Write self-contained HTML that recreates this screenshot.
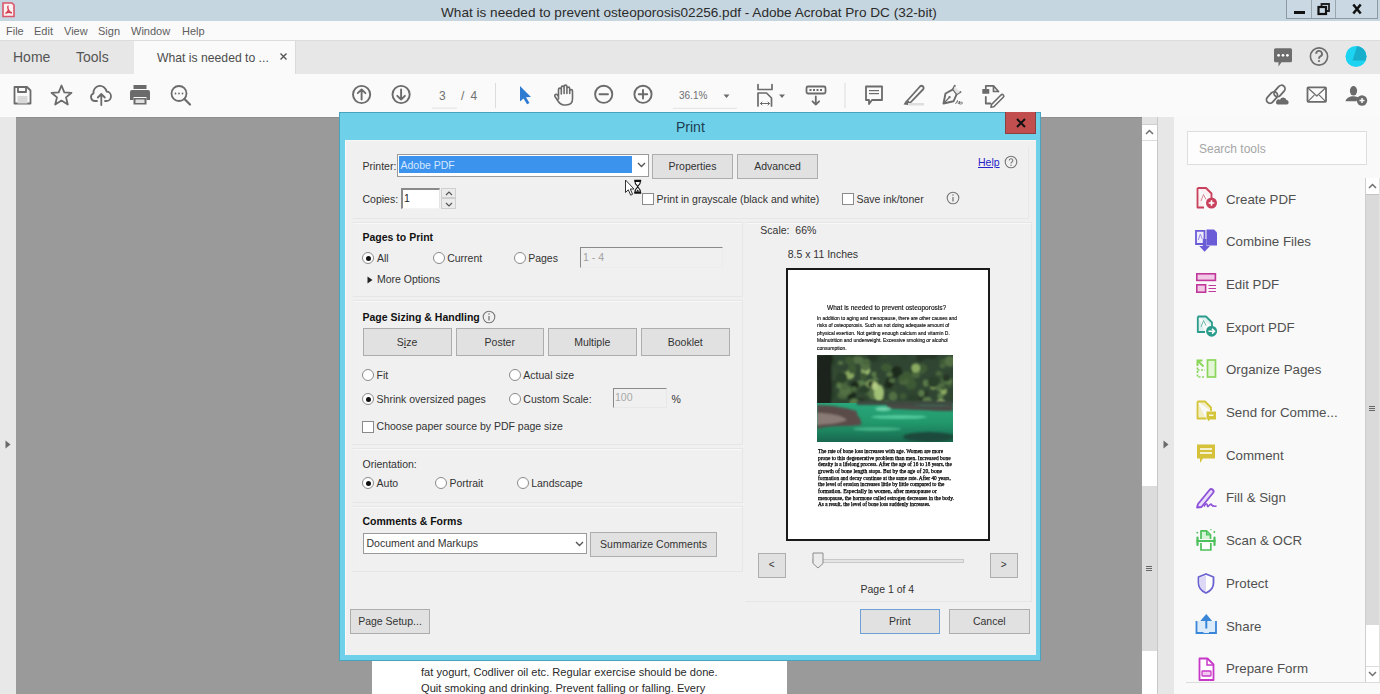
<!DOCTYPE html>
<html><head><meta charset="utf-8">
<style>
*{margin:0;padding:0;box-sizing:border-box}
html,body{width:1380px;height:694px;overflow:hidden;background:#9a9a9a;font-family:"Liberation Sans",sans-serif;color:#333}
.a{position:absolute}
.t{position:absolute;white-space:nowrap;line-height:1}
svg{position:absolute;overflow:visible}
#titlebar{left:0;top:0;width:1380px;height:21px;background:#c6d6e0}
#menubar{left:0;top:21px;width:1380px;height:19px;background:#fafafa}
#tabbar{left:0;top:40px;width:1380px;height:34px;background:#e7e7e7;border-top:1px solid #dcdcdc}
#toolbar{left:0;top:74px;width:1380px;height:43px;background:#fafafa}
#leftstrip{left:0;top:117px;width:16px;height:577px;background:#e8e8e8}
#docarea{left:16px;top:117px;width:1126px;height:577px;background:#9a9a9a}
#rightpanel{left:1174px;top:117px;width:206px;height:577px;background:#f9f9f9}
.menu{font-size:11px;color:#5e5e5e;top:26px}
.tb{stroke:#6b6b6b;fill:none;stroke-width:1.6}
.btn{position:absolute;background:#e1e1e1;border:1px solid #adadad;font-size:10.5px;color:#333;display:flex;align-items:center;justify-content:center;line-height:1;white-space:nowrap}
.rad{position:absolute;width:12px;height:12px;border-radius:50%;background:#fff;border:1px solid #8a8a8a}
.dot{position:absolute;width:5px;height:5px;border-radius:50%;background:#111}
.chk{position:absolute;width:12px;height:12px;background:#fff;border:1px solid #8a8a8a}
.pnl{position:absolute;border:1px solid #e6e6e6;border-left-color:#efefef;box-shadow:inset 0 1px 0 #f8f8f8}
</style></head><body>
<!-- TITLE BAR -->
<div id="titlebar" class="a">
  <svg style="left:2px;top:2px" width="13" height="16" viewBox="0 0 13 16"><path d="M1 1 H10 L12 3 V14.5 H1 Z" fill="#fdf0f0" stroke="#d9556a" stroke-width="1.6"/><path d="M6.5 4 C5.5 4 5.8 6.5 6.5 8 C5.5 10 4.5 11 3.5 11.5 M6.5 8 C7.5 10 8.5 10.8 10 11 M4 11 C6 10 8 10 9.5 11" stroke="#d23c50" stroke-width="1.4" fill="none"/></svg>
  <div class="t" style="left:441px;top:5.5px;font-size:13.6px;color:#2b2b2b">What is needed to prevent osteoporosis02256.pdf - Adobe Acrobat Pro DC (32-bit)</div>
  <div class="a" style="left:1286px;top:0;width:92px;height:19px;border:1px solid #8e9aa3;border-top:none;background:#c9d8e2"></div>
  <div class="a" style="left:1311px;top:0;width:1px;height:18px;background:#9aa6ae"></div>
  <div class="a" style="left:1335px;top:0;width:1px;height:18px;background:#9aa6ae"></div>
  <div class="a" style="left:1294px;top:11px;width:11px;height:2.5px;background:#111"></div>
  <svg style="left:1317px;top:3px" width="13" height="12" viewBox="0 0 13 12"><path d="M4.5 3.5 V1 H12 V8 H9.5" fill="none" stroke="#222" stroke-width="1.8"/><rect x="1.5" y="4" width="7.5" height="7" fill="#c9d8e2" stroke="#111" stroke-width="2.2"/></svg>
  <svg style="left:1352px;top:4px" width="10" height="10" viewBox="0 0 10 10"><path d="M1.3 0.5 L8.7 9.5 M8.7 0.5 L1.3 9.5" stroke="#111" stroke-width="2.5"/></svg>
</div>
<!-- MENU BAR -->
<div id="menubar" class="a"></div>
<div class="t menu" style="left:6px">File</div>
<div class="t menu" style="left:34px">Edit</div>
<div class="t menu" style="left:64px">View</div>
<div class="t menu" style="left:98px">Sign</div>
<div class="t menu" style="left:131px">Window</div>
<div class="t menu" style="left:182px">Help</div>
<!-- TAB BAR -->
<div id="tabbar" class="a"></div>
<div class="a" style="left:134px;top:41px;width:161px;height:33px;background:#fafafa"></div>
<div class="a" style="left:295px;top:41px;width:1px;height:33px;background:#dadada"></div>
<div class="t" style="left:13px;top:50px;font-size:14px;color:#555">Home</div>
<div class="t" style="left:76px;top:50px;font-size:14px;color:#555">Tools</div>
<div class="t" style="left:157px;top:52px;font-size:12.2px;color:#4d4d4d">What is needed to ...</div>
<svg style="left:280px;top:53px" width="7" height="7" viewBox="0 0 7 7"><path d="M0.5 0.5 L6.5 6.5 M6.5 0.5 L0.5 6.5" stroke="#555" stroke-width="1.4"/></svg>
<!-- right tab icons -->
<svg style="left:0;top:0" width="1380" height="80" viewBox="0 0 1380 80">
 <path d="M1275.5 48.3 H1290.5 A1.5 1.5 0 0 1 1292 49.8 V60.8 A1.5 1.5 0 0 1 1290.5 62.3 H1281.5 L1278.5 66.5 V62.3 H1275.5 A1.5 1.5 0 0 1 1274 60.8 V49.8 A1.5 1.5 0 0 1 1275.5 48.3 Z" fill="#6d6d6d"/>
 <circle cx="1278.6" cy="55.3" r="1.35" fill="#fff"/><circle cx="1283" cy="55.3" r="1.35" fill="#fff"/><circle cx="1287.4" cy="55.3" r="1.35" fill="#fff"/>
 <circle cx="1319" cy="56.5" r="8.6" fill="none" stroke="#6d6d6d" stroke-width="1.6"/>
 <path d="M1316.2 53.8 A2.9 2.9 0 1 1 1320.3 56.4 C1319.3 56.9 1319 57.4 1319 58.8" fill="none" stroke="#6d6d6d" stroke-width="1.9"/>
 <circle cx="1319" cy="61" r="1.1" fill="#6d6d6d"/>
 <defs><clipPath id="avc"><circle cx="1356" cy="56.5" r="10.5"/></clipPath></defs>
 <circle cx="1356" cy="56.5" r="10.5" fill="#1cd4f2"/>
 <path d="M1357.5 45 L1352.5 60.5 H1368 V45 Z" fill="#17aecb" clip-path="url(#avc)"/>
</svg>
<!-- TOOLBAR -->
<div id="toolbar" class="a"></div>
<svg style="left:0;top:0" width="1380" height="120" viewBox="0 0 1380 120">
 <g stroke="#6b6b6b" fill="none" stroke-width="1.8" stroke-linejoin="round" stroke-linecap="round">
  <!-- save -->
  <path d="M14.5 87 H27 L30.5 90.5 V103.5 H14.5 Z"/>
  <rect x="18" y="87" width="8" height="5" />
  <rect x="17.5" y="96" width="10" height="7.5" fill="#d9d9d9" stroke="none"/>
  <!-- star -->
  <path d="M61.5 85.5 L64.3 92.3 L71.5 92.8 L66 97.4 L67.8 104.5 L61.5 100.6 L55.2 104.5 L57 97.4 L51.5 92.8 L58.7 92.3 Z"/>
  <!-- cloud upload -->
  <path d="M97 101 H95 A4 4 0 0 1 93.5 93.3 A6.5 6.5 0 0 1 106.5 91.5 A4.5 4.5 0 0 1 106 101 H105"/>
  <path d="M101.3 105 V94 M97.8 97.5 L101.3 94 L104.8 97.5"/>
  <!-- search -->
  <circle cx="179" cy="93.5" r="7.5"/>
  <path d="M184.5 99 L190 104.5" stroke-width="2.2"/>
 </g>
 <!-- printer -->
 <g fill="#6b6b6b">
  <path d="M133.5 85 H146.5 V89 H133.5 Z"/>
  <path d="M132 90 H148 A2 2 0 0 1 150 92 V100 H146.5 V97 H133.5 V100 H130 V92 A2 2 0 0 1 132 90 Z"/>
  <path d="M133.5 98 H146.5 V104.5 H133.5 Z"/>
  <rect x="135.5" y="99.5" width="9" height="3.5" fill="#e0e0e0"/>
  <circle cx="175.5" cy="93.5" r="0.9"/><circle cx="179" cy="93.5" r="0.9"/><circle cx="182.5" cy="93.5" r="0.9"/>
 </g>
 <g stroke="#6b6b6b" fill="none" stroke-width="1.9" stroke-linecap="round" stroke-linejoin="round">
  <circle cx="361.6" cy="94.5" r="8.6"/>
  <path d="M361.6 99.5 V89.5 M357.8 93.2 L361.6 89.4 L365.4 93.2"/>
  <circle cx="401.1" cy="94.5" r="8.6"/>
  <path d="M401.1 89.5 V99.5 M397.3 95.8 L401.1 99.6 L404.9 95.8"/>
  <circle cx="603.7" cy="94.3" r="8.6"/>
  <path d="M599.5 94.3 H608"/>
  <circle cx="643" cy="94.3" r="8.6"/>
  <path d="M638.8 94.3 H647.2 M643 90 V98.6"/>
  <!-- hand -->
  <path d="M558.5 99 V89.5 A1.4 1.4 0 0 1 561.3 89.5 V94 V87.5 A1.4 1.4 0 0 1 564.1 87.5 V93.5 V86.5 A1.4 1.4 0 0 1 566.9 86.5 V93.5 V88.5 A1.4 1.4 0 0 1 569.7 88.5 V93.5 V91 A1.4 1.4 0 0 1 572.5 91 V99 C572.5 103 570 105 566 105 H563.5 C561 105 559.8 103.5 558.3 101.5 L555 96.5 A1.4 1.4 0 0 1 557.4 95 L558.5 96.5" stroke-width="1.6"/>
  <!-- fit page -->
  <path d="M758 84.5 V89.5 H772 V84.5" stroke-width="1.7"/>
  <path d="M758 106 V93 H766.5 L771.5 98 V106" stroke-width="1.7"/>
  <path d="M760.5 103.5 H769.5 M762 102 L760.5 103.5 L762 105 M768 102 L769.5 103.5 L768 105" stroke-width="1"/>
 </g>
 <g fill="#6b6b6b">
  <path d="M723.5 94.5 H729.5 L726.5 98 Z"/>
  <path d="M779 94.5 H785 L782 98 Z"/>
 </g>
 <path d="M520 86 L531 97 L526 97.3 L529.5 103 L527 104.3 L523.5 98.5 L520 101.5 Z" fill="#2e7bd1"/>
 <rect x="432" y="107.6" width="25" height="1" fill="#e2e2e2"/>
 <rect x="673" y="107.8" width="64" height="1" fill="#e2e2e2"/>
 <rect x="495" y="83" width="1" height="25" fill="#dcdcdc"/>
 <rect x="844.5" y="83" width="1" height="25" fill="#dcdcdc"/>
 <g stroke="#6b6b6b" fill="none" stroke-width="1.8" stroke-linecap="round" stroke-linejoin="round">
  <!-- download/keyboard -->
  <rect x="806.5" y="86.5" width="19" height="7" rx="1.5"/>
  <path d="M815.8 96.5 V104.5 M812.5 101.3 L815.8 104.6 L819.1 101.3"/>
  <!-- comment -->
  <path d="M866 86.5 H882 V100 H872 L869 104 V100 H866 Z"/>
  <!-- highlighter -->
  <path d="M907 101 L920 86.5 A2 2 0 0 1 923 89.5 L910 103 Z"/>
  <!-- sign pen -->
  <path d="M943.5 103.5 L945.5 93.5 L953 89.3 L956.7 94.2 L953.5 101.3 Z" stroke-width="1.9"/>
  <path d="M953 89.3 L954.8 85.8 M956.7 94.2 L960.5 92" stroke-width="1.9"/>
  <path d="M944 103 L949.8 97"  stroke-width="1.2"/>
  <!-- edit doc -->
  <path d="M985.8 89 V85.8 H993.5 L998.5 91.5 M993.5 86 V91.5 H998" stroke-width="1.7"/>
  <path d="M985.8 97 V103.5 H990.5" stroke-width="1.8"/>
  <path d="M991.5 104.5 L1001 95 A1.6 1.6 0 0 1 1003.3 97.3 L993.8 106.8 L991 107.3 Z" stroke-width="1.6"/>
  <!-- link cloud -->
  <rect x="1273" y="87.5" width="13" height="7" rx="3.5" transform="rotate(-48 1279.5 91)" stroke-width="1.8"/>
  <rect x="1265.5" y="94" width="13" height="7" rx="3.5" transform="rotate(-48 1272 97.5)" stroke-width="1.8"/>
  <!-- mail -->
  <rect x="1307.5" y="87.3" width="18.5" height="14.5" rx="0.8"/>
  <path d="M1308 88 L1316.8 96 L1325.5 88 M1308 101.3 L1314 95.3 M1325.5 101.3 L1319.5 95.3" stroke-width="1.2"/>
 </g>
 <g fill="#6b6b6b">
  <rect x="869" y="90" width="10" height="1.2"/><rect x="869" y="93" width="10" height="1.2"/>
  <rect x="809.5" y="89" width="2" height="2" fill="#6b6b6b"/><rect x="813" y="89" width="2" height="2" fill="#6b6b6b"/><rect x="816.5" y="89" width="2" height="2" fill="#6b6b6b"/><rect x="820" y="89" width="2" height="2" fill="#6b6b6b"/>
  <path d="M903.5 104.5 L906 100.5 L909.5 103.5 L908 105 Z"/>
  <rect x="908" y="103" width="16" height="2.5" fill="#dedede"/>
  <path d="M954.5 86.5 L960 92 L957 94 L953.5 89.5 Z" fill="#e4e4e4"/>
  <circle cx="949.5" cy="97.2" r="1.1"/>
  <path d="M955.5 104 L957.5 100.5 L958.5 104 M959.5 101 V104 C961 104 962.5 104 962.5 103 C962.5 102 961 102 959.5 102.5" stroke="#6b6b6b" stroke-width="0.9" fill="none"/>
  <rect x="982.3" y="89" width="7" height="4.8" rx="0.6"/>
  <path d="M1277.5 104.6 H1287.2 A2.4 2.4 0 0 0 1286.5 100 A3.4 3.4 0 0 0 1280 99.8 A2.4 2.4 0 0 0 1277.5 104.6 Z"/>
  <!-- person add -->
  <ellipse cx="1353.5" cy="90.8" rx="3.6" ry="4.8"/>
  <path d="M1345.5 101.3 C1346.5 97.8 1349.5 96.3 1353.5 96.3 C1356 96.3 1357.5 97 1359 98 A5 5 0 0 0 1356.5 101.3 Z"/>
  <circle cx="1362" cy="100.5" r="5.2"/>
 </g>
 <path d="M1359.5 100.5 H1364.5 M1362 98 V103" stroke="#fafafa" stroke-width="1.5"/>
</svg>
<div class="t" style="left:439px;top:90px;font-size:12px;color:#707070">3</div>
<div class="t" style="left:461px;top:90px;font-size:12px;color:#707070">/</div><div class="t" style="left:470.5px;top:90px;font-size:12px;color:#707070">4</div>
<div class="t" style="left:679px;top:91px;font-size:10px;color:#6e6e6e">36.1%</div>
<!-- MAIN AREA -->
<div id="leftstrip" class="a"></div>
<svg style="left:5px;top:440px" width="6" height="9" viewBox="0 0 6 9"><path d="M0.5 0.5 L5.5 4.5 L0.5 8.5 Z" fill="#6a6a6a"/></svg>
<div id="docarea" class="a"></div>
<div class="a" style="left:16px;top:117px;width:1126px;height:1px;background:#8e8e8e"></div>
<div class="a" style="left:372px;top:640px;width:415px;height:54px;background:#fff"></div>
<div class="t" style="left:421px;top:666.5px;font-size:11.1px;color:#2a2a2a">fat yogurt, Codliver oil etc. Regular exercise should be done.</div>
<div class="t" style="left:421px;top:682.5px;font-size:11.1px;color:#2a2a2a">Quit smoking and drinking. Prevent falling or falling. Every</div>
<!-- main scrollbar -->
<div class="a" style="left:1142px;top:117px;width:15px;height:577px;background:#fff"></div>
<div class="a" style="left:1142px;top:117px;width:15px;height:8px;background:#e3e3e3;border-bottom:1px solid #cfcfcf"></div>
<div class="a" style="left:1142px;top:140px;width:15px;height:1px;background:#dcdcdc"></div>
<svg style="left:1145px;top:129px" width="9" height="6" viewBox="0 0 9 6"><path d="M1 5 L4.5 1.5 L8 5" stroke="#707070" stroke-width="1.5" fill="none"/></svg>
<div class="a" style="left:1142px;top:486px;width:15px;height:165px;background:#dcdcdc"></div>
<div class="a" style="left:1146px;top:566px;width:6px;height:1px;background:#666"></div>
<div class="a" style="left:1146px;top:568px;width:6px;height:1px;background:#666"></div>
<div class="a" style="left:1146px;top:570px;width:6px;height:1px;background:#666"></div>
<div class="a" style="left:1157px;top:117px;width:1px;height:577px;background:#c8c8c8"></div>
<div class="a" style="left:1158px;top:117px;width:16px;height:577px;background:#e7e7e7"></div>
<svg style="left:1163px;top:440px" width="6" height="9" viewBox="0 0 6 9"><path d="M0.5 0.5 L5.5 4.5 L0.5 8.5 Z" fill="#6a6a6a"/></svg>
<!-- RIGHT PANEL -->
<div id="rightpanel" class="a"></div>
<div class="a" style="left:1187px;top:131px;width:180px;height:34px;background:#fdfdfd;border:1px solid #dedede"></div>
<div class="t" style="left:1199px;top:142.5px;font-size:12px;color:#a6a6a6">Search tools</div>
<div class="a" style="left:1365px;top:178px;width:15px;height:504px;background:#fff;border-left:1px solid #cfcfcf;border-right:1px solid #e2e2e2"></div>
<div class="a" style="left:1366px;top:194px;width:13px;height:431px;background:#dadada;border-top:1px solid #c4c4c4"></div>
<svg style="left:1368px;top:183px" width="9" height="6" viewBox="0 0 9 6"><path d="M1 5 L4.5 1.5 L8 5" stroke="#707070" stroke-width="1.5" fill="none"/></svg>
<svg style="left:1368px;top:671px" width="9" height="6" viewBox="0 0 9 6"><path d="M1 1 L4.5 4.5 L8 1" stroke="#707070" stroke-width="1.5" fill="none"/></svg>
<div class="a" style="left:1366px;top:666px;width:13px;height:1px;background:#dcdcdc"></div>
<div class="a" style="left:1369px;top:406px;width:6px;height:1px;background:#666"></div>
<div class="a" style="left:1369px;top:408px;width:6px;height:1px;background:#666"></div>
<div class="a" style="left:1369px;top:410px;width:6px;height:1px;background:#666"></div>
<div class="a" style="left:1186px;top:682px;width:194px;height:1px;background:#dcdcdc"></div>
<!-- TOOLS LIST -->
<div class="t" style="left:1226px;top:192.5px;font-size:13.3px;color:#505050">Create PDF</div>
<div class="t" style="left:1226px;top:235.2px;font-size:13.3px;color:#505050">Combine Files</div>
<div class="t" style="left:1226px;top:277.9px;font-size:13.3px;color:#505050">Edit PDF</div>
<div class="t" style="left:1226px;top:320.6px;font-size:13.3px;color:#505050">Export PDF</div>
<div class="t" style="left:1226px;top:363.3px;font-size:13.3px;color:#505050">Organize Pages</div>
<div class="t" style="left:1226px;top:406.0px;font-size:13.3px;color:#505050">Send for Comme...</div>
<div class="t" style="left:1226px;top:448.7px;font-size:13.3px;color:#505050">Comment</div>
<div class="t" style="left:1226px;top:491.4px;font-size:13.3px;color:#505050">Fill &amp; Sign</div>
<div class="t" style="left:1226px;top:534.1px;font-size:13.3px;color:#505050">Scan &amp; OCR</div>
<div class="t" style="left:1226px;top:576.8px;font-size:13.3px;color:#505050">Protect</div>
<div class="t" style="left:1226px;top:619.5px;font-size:13.3px;color:#505050">Share</div>
<div class="t" style="left:1226px;top:662.2px;font-size:13.3px;color:#505050">Prepare Form</div>
<svg style="left:0;top:0" width="1380" height="694" viewBox="0 0 1380 694">
 <!-- create pdf -->
 <path d="M1197.5 188 H1206 L1211.5 193.5 V199 M1197.5 188 V207.5 H1204" fill="#fbeef1" stroke="#c8405c" stroke-width="1.8" stroke-linejoin="round"/>
 <path d="M1201 201 L1203.5 194.5 L1206 199.5" stroke="#d27a8a" stroke-width="0.9" fill="none"/>
 <circle cx="1211.5" cy="203" r="5.5" fill="#c8405c"/>
 <path d="M1208.7 203 H1214.3 M1211.5 200.2 V205.8" stroke="#fff" stroke-width="1.6"/>
 <!-- combine -->
 <path d="M1196 230.8 H1204.5 V244 H1196 Z" fill="#f0eefc" stroke="#6a5bd6" stroke-width="1.8"/>
 <path d="M1206.5 229.5 H1214 L1217 232.5 V245.5 H1206.5 Z" fill="#6a5bd6"/>
 <path d="M1202.8 239 H1206.5 V246 H1210 L1204.6 251.8 L1199.2 246 H1202.8 Z" fill="#6a5bd6"/>
 <path d="M1198.3 240 L1200.3 234 L1202.3 239" stroke="#8a80e0" stroke-width="0.9" fill="none"/>
 <!-- edit pdf -->
 <rect x="1196.8" y="273.8" width="18.6" height="6.6" fill="#f3c8e6" stroke="#c0389a" stroke-width="1.6"/>
 <rect x="1196.8" y="284.8" width="8.8" height="7.4" fill="#f3c8e6" stroke="#c0389a" stroke-width="1.6"/>
 <path d="M1208.5 285.5 H1216 M1208.5 288.5 H1216 M1208.5 291.5 H1216" stroke="#c0389a" stroke-width="1.1"/>
 <!-- export pdf -->
 <path d="M1197.8 316.5 H1206 L1212 322.5 V326 M1197.8 316.5 V332 H1205" fill="#def0ee" stroke="#2b9c8c" stroke-width="1.8" stroke-linejoin="round"/>
 <path d="M1201 327 L1203.5 320.5 L1206 325.5" stroke="#5bb0a5" stroke-width="0.9" fill="none"/>
 <circle cx="1211.6" cy="331.2" r="5.5" fill="#2b9c8c"/>
 <path d="M1208.5 331.2 H1214 M1212 328.8 L1214.5 331.2 L1212 333.6" stroke="#fff" stroke-width="1.5" fill="none"/>
 <!-- organize -->
 <rect x="1207.5" y="360" width="8" height="17" fill="#e2f5d4" stroke="#8bd65a" stroke-width="1.7"/>
 <path d="M1197.5 364 V377 H1205 M1197.5 370 H1205" stroke="#8bd65a" stroke-width="1.7" stroke-dasharray="2 1.5" fill="none"/>
 <path d="M1197 360 L1203.5 366.5 M1197.5 365.5 V360.5 H1202.5" stroke="#8bd65a" stroke-width="1.9" fill="none"/>
 <!-- send for comments -->
 <path d="M1197.5 401.5 H1205 L1211 407.5 V411 M1197.5 401.5 V418.5 H1206" fill="#f2eec6" stroke="#d4c43a" stroke-width="1.8" stroke-linejoin="round"/>
 <path d="M1206.5 411.5 H1216 V419.5 H1210 L1208 421.5 V419.5 H1206.5 Z" fill="#d4c43a"/>
 <rect x="1209" y="414.6" width="4.5" height="1.2" fill="#fff"/>
 <!-- comment -->
 <path d="M1197 444.5 H1215 V458.5 H1203 L1200 463 V458.5 H1197 Z" fill="#d6c23a"/>
 <path d="M1200 449 H1212 M1200 453 H1212" stroke="#fff" stroke-width="1.6"/>
 <!-- fill & sign -->
 <path d="M1198 504 L1209.5 490 A2.3 2.3 0 0 1 1213 493 L1201.5 507 L1197 507.5 Z" fill="#e9dcfa" stroke="#8c4fd8" stroke-width="1.8" stroke-linejoin="round"/>
 <path d="M1204 506.5 C1206 503 1207 503 1207.5 506 C1208 508 1210 503.5 1211 504 C1212 505 1212 507 1216.5 506" stroke="#8c4fd8" stroke-width="1.6" fill="none"/>
 <!-- scan ocr -->
 <path d="M1201 539 V530.8 H1206.5 L1210.5 534.8 V539" fill="#d8f4d8" stroke="#4cc05a" stroke-width="1.7" stroke-linejoin="round"/>
 <path d="M1206.5 531 V535 H1210.3" fill="#7fd88a" stroke="#4cc05a" stroke-width="1.2"/>
 <path d="M1196.5 541 H1215.5" stroke="#4cc05a" stroke-width="2"/>
 <path d="M1197.5 537.5 V545 M1214.5 537.5 V545" stroke="#4cc05a" stroke-width="2.2" stroke-linecap="round"/>
 <path d="M1201 543 V550 H1210.8 V543" fill="#fff" stroke="#4cc05a" stroke-width="1.7"/>
 <circle cx="1197.3" cy="532.7" r="0.9" fill="#4cc05a"/>
 <path d="M1214.3 530.7 L1215.5 532 L1214.3 533.3 L1213.1 532 Z M1211 528.8 L1211.8 529.6 L1211 530.4 L1210.2 529.6 Z" fill="#4cc05a"/>
 <!-- protect -->
 <path d="M1206 574 L1213.5 577 V583 C1213.5 588 1210.5 591 1206 593 C1201.5 591 1198.5 588 1198.5 583 V577 Z" fill="#fff" stroke="#6a62d0" stroke-width="1.8" stroke-linejoin="round"/>
 <path d="M1206 575.5 V591.5 C1202.5 590 1199.5 587.5 1199.5 583 V577.8 Z" fill="#dcd8f6"/>
 <!-- share -->
 <path d="M1196.5 621 V633 H1216 V621" fill="#dcebf9" stroke="#3a86d8" stroke-width="1.8"/>
 <path d="M1203.5 621.5 V633 H1209 V621.5" fill="#dcebf9"/>
 <path d="M1206.3 628.5 V616.5 M1202.5 620 L1206.3 615.5 L1210 620 Z" stroke="#3a86d8" fill="#3a86d8" stroke-width="2"/>
 <!-- prepare form -->
 <path d="M1199.5 658.5 H1207.5 L1213.5 664.5 V680 H1199.5 Z" fill="#fff" stroke="#c838c8" stroke-width="1.8" stroke-linejoin="round"/>
 <path d="M1207 658.5 V665 H1213.5" fill="none" stroke="#c838c8" stroke-width="1.5"/>
 <rect x="1202" y="671" width="9" height="5" rx="0.8" fill="#f0c8f0" stroke="#c838c8" stroke-width="1.3"/>
</svg>
<!-- DIALOG -->
<div class="a" style="left:339px;top:112px;width:702px;height:549px;background:#6fd1e9;border:1px solid #4aa3bc"></div>
<div class="a" style="left:345px;top:140px;width:691px;height:515px;background:#f0f0f0;border-left:1px solid #fafafa;border-top:1px solid #f6f6f6"></div>
<div class="t" style="left:676px;top:120px;font-size:14px;color:#1c3d52">Print</div>
<div class="a" style="left:1005px;top:112px;width:31px;height:22px;background:#c24f4f;border:1px solid #8c4040;border-top:none"></div>
<svg style="left:1016px;top:118px" width="10" height="10" viewBox="0 0 10 10"><path d="M1 1 L9 9 M9 1 L1 9" stroke="#111" stroke-width="2"/></svg>
<!-- panels -->
<div class="pnl" style="left:352px;top:147px;width:677px;height:72px;border-top-color:transparent;border-left-color:transparent;box-shadow:none"></div>
<div class="pnl" style="left:352px;top:222px;width:391px;height:75px"></div>
<div class="pnl" style="left:352px;top:300px;width:391px;height:145px"></div>
<div class="pnl" style="left:352px;top:448px;width:391px;height:55px"></div>
<div class="pnl" style="left:352px;top:506px;width:391px;height:66px"></div>
<div class="pnl" style="left:745px;top:222px;width:287px;height:380px"></div>
<div class="t" style="left:362.5px;top:161.2px;font-size:10.5px;color:#333;">Printer:</div>
<div class="a" style="left:397px;top:154px;width:252px;height:23px;background:#fff;border:1px solid #9a9a9a"></div>
<div class="a" style="left:399px;top:156px;width:233px;height:17px;background:#3b93ee"></div>
<div class="t" style="left:400.5px;top:160.2px;font-size:10.5px;color:#d5e8ff;">Adobe PDF</div>
<svg style="left:637px;top:162px" width="9" height="6" viewBox="0 0 9 6"><path d="M1 1 L4.5 4.5 L8 1" stroke="#555" stroke-width="1.4" fill="none"/></svg>
<div class="t" style="left:362.5px;top:193.9px;font-size:10.5px;color:#333;">Copies:</div>
<div class="a" style="left:401px;top:188px;width:39px;height:21px;background:#fff;border-top:2px solid #8a8a8a;border-left:2px solid #8a8a8a;border-right:1px solid #e4e4e4;border-bottom:1px solid #f4f4f4"></div>
<div class="t" style="left:404px;top:193.4px;font-size:10.5px;color:#222;">1</div>
<div class="a" style="left:441px;top:188px;width:15px;height:10px;background:#ebebeb;border:1px solid #cfcfcf"></div>
<div class="a" style="left:441px;top:198px;width:15px;height:11px;background:#ebebeb;border:1px solid #cfcfcf"></div>
<svg style="left:444.5px;top:191px" width="8" height="5" viewBox="0 0 8 5"><path d="M1 4 L4 1 L7 4" stroke="#555" stroke-width="1.2" fill="none"/></svg>
<svg style="left:444.5px;top:201.5px" width="8" height="5" viewBox="0 0 8 5"><path d="M1 1 L4 4 L7 1" stroke="#555" stroke-width="1.2" fill="none"/></svg>
<div class="btn" style="left:652px;top:154px;width:81px;height:25px;">Properties</div>
<div class="btn" style="left:737px;top:154px;width:81px;height:25px;">Advanced</div>
<div class="t" style="left:978px;top:157.4px;font-size:10.5px;color:#2424c8;"><u>Help</u></div>
<svg style="left:1004px;top:155px" width="14" height="14" viewBox="0 0 14 14"><circle cx="7" cy="7" r="5.8" fill="none" stroke="#777" stroke-width="1.1"/><path d="M5.2 5.6 A1.8 1.8 0 1 1 7.6 7.3 C7.1 7.6 7 7.9 7 8.6" fill="none" stroke="#777" stroke-width="1.1"/><circle cx="7" cy="10.2" r="0.7" fill="#777"/></svg>
<div class="chk" style="left:642px;top:193px"></div>
<div class="t" style="left:656.5px;top:194.1px;font-size:10.5px;color:#333;">Print in grayscale (black and white)</div>
<div class="chk" style="left:842px;top:193px"></div>
<div class="t" style="left:856.5px;top:194.1px;font-size:10.5px;color:#333;">Save ink/toner</div>
<svg style="left:945.5px;top:190.5px" width="14" height="14" viewBox="0 0 14 14"><circle cx="7" cy="7" r="5.8" fill="none" stroke="#777" stroke-width="1.1"/><path d="M7 6 V10.5" stroke="#777" stroke-width="1.3"/><circle cx="7" cy="4" r="0.8" fill="#777"/></svg>
<div class="t" style="left:362.5px;top:231.5px;font-size:10.5px;color:#111;font-weight:bold">Pages to Print</div>
<div class="rad" style="left:362px;top:252px"></div>
<div class="dot" style="left:365.5px;top:255.5px"></div>
<div class="t" style="left:377px;top:252.9px;font-size:10.5px;color:#333;">All</div>
<div class="rad" style="left:432.5px;top:252px"></div>
<div class="t" style="left:447.2px;top:252.9px;font-size:10.5px;color:#333;">Current</div>
<div class="rad" style="left:513.5px;top:252px"></div>
<div class="t" style="left:528.2px;top:252.9px;font-size:10.5px;color:#333;">Pages</div>
<div class="a" style="left:580px;top:247px;width:143px;height:21px;background:#f0f0f0;border-top:1px solid #8a8a8a;border-left:1px solid #8a8a8a;border-right:1px solid #ececec;border-bottom:1px solid #ececec"></div>
<div class="t" style="left:583px;top:251.9px;font-size:10.5px;color:#a0a0a0;">1 - 4</div>
<svg style="left:367px;top:275.5px" width="6" height="8" viewBox="0 0 6 8"><path d="M0.5 0.5 L5.5 4 L0.5 7.5 Z" fill="#222"/></svg>
<div class="t" style="left:377px;top:274.4px;font-size:10.5px;color:#333;">More Options</div>
<div class="t" style="left:362.5px;top:312.1px;font-size:10.5px;color:#111;font-weight:bold">Page Sizing &amp; Handling</div>
<svg style="left:482px;top:309.5px" width="14" height="14" viewBox="0 0 14 14"><circle cx="7" cy="7" r="5.8" fill="none" stroke="#777" stroke-width="1.1"/><path d="M7 6 V10.5" stroke="#777" stroke-width="1.3"/><circle cx="7" cy="4" r="0.8" fill="#777"/></svg>
<div class="btn" style="left:362.5px;top:328px;width:89.0px;height:28px;">S<u>i</u>ze</div>
<div class="btn" style="left:455.5px;top:328px;width:88.5px;height:28px;">Poster</div>
<div class="btn" style="left:548px;top:328px;width:88.5px;height:28px;">Multiple</div>
<div class="btn" style="left:641px;top:328px;width:88.5px;height:28px;">Booklet</div>
<div class="rad" style="left:362px;top:369px"></div>
<div class="t" style="left:376.6px;top:369.9px;font-size:10.5px;color:#333;">Fit</div>
<div class="rad" style="left:509px;top:369px"></div>
<div class="t" style="left:523.3px;top:369.9px;font-size:10.5px;color:#333;">Actual size</div>
<div class="rad" style="left:362px;top:393.3px"></div>
<div class="dot" style="left:365.5px;top:396.8px"></div>
<div class="t" style="left:376.6px;top:394.2px;font-size:10.5px;color:#333;">Shrink oversized pages</div>
<div class="rad" style="left:509px;top:393.3px"></div>
<div class="t" style="left:523.3px;top:394.2px;font-size:10.5px;color:#333;">Custom Scale:</div>
<div class="a" style="left:613px;top:388px;width:54px;height:20px;background:#f0f0f0;border-top:1px solid #8a8a8a;border-left:1px solid #8a8a8a;border-right:1px solid #e8e8e8;border-bottom:1px solid #e8e8e8"></div>
<div class="t" style="left:615px;top:392.4px;font-size:10.5px;color:#a8a8a8;">100</div>
<div class="t" style="left:671.5px;top:394.3px;font-size:10.5px;color:#333;">%</div>
<div class="chk" style="left:362px;top:420.5px"></div>
<div class="t" style="left:376.6px;top:421.4px;font-size:10.5px;color:#333;">Choose paper source by PDF page size</div>
<div class="t" style="left:362.5px;top:458.9px;font-size:10.5px;color:#333;">Orientation:</div>
<div class="rad" style="left:362px;top:477px"></div>
<div class="dot" style="left:365.5px;top:480.5px"></div>
<div class="t" style="left:376.6px;top:477.9px;font-size:10.5px;color:#333;">Auto</div>
<div class="rad" style="left:434.5px;top:477px"></div>
<div class="t" style="left:449.4px;top:477.9px;font-size:10.5px;color:#333;">Portrait</div>
<div class="rad" style="left:516.5px;top:477px"></div>
<div class="t" style="left:531.2px;top:477.9px;font-size:10.5px;color:#333;">Landscape</div>
<div class="t" style="left:362.5px;top:516.2px;font-size:10.5px;color:#111;font-weight:bold">Comments &amp; Forms</div>
<div class="a" style="left:362.5px;top:532.5px;width:224px;height:21.5px;background:#fff;border:1px solid #9a9a9a"></div>
<div class="t" style="left:366.5px;top:538.2px;font-size:10.5px;color:#333;">Document and Markups</div>
<svg style="left:574.5px;top:540.5px" width="9" height="6" viewBox="0 0 9 6"><path d="M1 1 L4.5 4.5 L8 1" stroke="#555" stroke-width="1.4" fill="none"/></svg>
<div class="btn" style="left:590px;top:532px;width:127px;height:25px;">Summarize Comments</div>
<div class="btn" style="left:350px;top:609px;width:80px;height:24.5px;">Page Setup...</div>
<div class="t" style="left:760.3px;top:224.7px;font-size:10.5px;color:#333;">Scale:&nbsp; 66%</div>
<div class="t" style="left:787.7px;top:249.3px;font-size:10.5px;color:#333;">8.5 x 11 Inches</div>
<div class="a" style="left:786px;top:267.5px;width:204px;height:273.5px;background:#fff;border:2px solid #1a1a1a"></div>
<div class="btn" style="left:758px;top:552.5px;width:27.5px;height:25.0px;font-size:10px">&lt;</div>
<div class="btn" style="left:990px;top:552.5px;width:27.5px;height:25.0px;font-size:10px">&gt;</div>
<div class="a" style="left:812px;top:558.5px;width:152px;height:4px;background:#e4e4e4;border:1px solid #c9c9c9"></div>
<svg style="left:811.5px;top:552px" width="12" height="17" viewBox="0 0 12 17"><path d="M1 1 H11 V11.5 L6 16 L1 11.5 Z" fill="#ececec" stroke="#8c8c8c" stroke-width="1"/></svg>
<div class="t" style="left:860.5px;top:584.2px;font-size:10.5px;color:#333;">Page 1 of 4</div>
<div class="btn" style="left:859.5px;top:608.5px;width:80.5px;height:25.0px;border-color:#6f9fd6">Print</div>
<div class="btn" style="left:949px;top:608.5px;width:80.5px;height:25.0px;">Cancel</div>
<!-- PREVIEW CONTENT -->
<div class="t" style="left:827.4px;top:304.82px;font-size:6.6px;font-family:'Liberation Sans';color:#111;-webkit-text-stroke:0.15px #111;transform:scaleX(0.995);transform-origin:0 0">What is needed to prevent osteoporosis?</div>
<div class="t" style="left:817.3px;top:316.09px;font-size:5.0px;font-family:'Liberation Sans';color:#111;-webkit-text-stroke:0.15px #111;transform:scaleX(0.986);transform-origin:0 0">In addition to aging and menopause, there are other causes and</div>
<div class="t" style="left:817.3px;top:323.19px;font-size:5.0px;font-family:'Liberation Sans';color:#111;-webkit-text-stroke:0.15px #111;transform:scaleX(0.985);transform-origin:0 0">risks of osteoporosis. Such as not doing adequate amount of</div>
<div class="t" style="left:817.3px;top:330.99px;font-size:5.0px;font-family:'Liberation Sans';color:#111;-webkit-text-stroke:0.15px #111;transform:scaleX(0.991);transform-origin:0 0">physical exertion. Not getting enough calcium and vitamin D.</div>
<div class="t" style="left:817.3px;top:338.39px;font-size:5.0px;font-family:'Liberation Sans';color:#111;-webkit-text-stroke:0.15px #111;transform:scaleX(0.986);transform-origin:0 0">Malnutrition and underweight. Excessive smoking or alcohol</div>
<div class="t" style="left:817.3px;top:345.79px;font-size:5.0px;font-family:'Liberation Sans';color:#111;-webkit-text-stroke:0.15px #111;transform:scaleX(0.995);transform-origin:0 0">consumption.</div>
<div class="t" style="left:818px;top:448.80px;font-size:5.6px;font-family:'Liberation Serif';color:#000;-webkit-text-stroke:0.25px #000;transform:scaleX(0.959);transform-origin:0 0">The rate of bone loss increases with age. Women are more</div>
<div class="t" style="left:818px;top:455.70px;font-size:5.6px;font-family:'Liberation Serif';color:#000;-webkit-text-stroke:0.25px #000;transform:scaleX(0.971);transform-origin:0 0">prone to this degenerative problem than men. Increased bone</div>
<div class="t" style="left:818px;top:462.40px;font-size:5.6px;font-family:'Liberation Serif';color:#000;-webkit-text-stroke:0.25px #000;transform:scaleX(0.939);transform-origin:0 0">density is a lifelong process. After the age of 16 to 18 years, the</div>
<div class="t" style="left:818px;top:469.30px;font-size:5.6px;font-family:'Liberation Serif';color:#000;-webkit-text-stroke:0.25px #000;transform:scaleX(0.996);transform-origin:0 0">growth of bone length stops. But by the age of 20, bone</div>
<div class="t" style="left:818px;top:475.90px;font-size:5.6px;font-family:'Liberation Serif';color:#000;-webkit-text-stroke:0.25px #000;transform:scaleX(0.956);transform-origin:0 0">formation and decay continue at the same rate. After 40 years,</div>
<div class="t" style="left:818px;top:482.00px;font-size:5.6px;font-family:'Liberation Serif';color:#000;-webkit-text-stroke:0.25px #000;transform:scaleX(0.952);transform-origin:0 0">the level of erosion increases little by little compared to the</div>
<div class="t" style="left:818px;top:488.90px;font-size:5.6px;font-family:'Liberation Serif';color:#000;-webkit-text-stroke:0.25px #000;transform:scaleX(1.012);transform-origin:0 0">formation. Especially in women, after menopause or</div>
<div class="t" style="left:818px;top:495.50px;font-size:5.6px;font-family:'Liberation Serif';color:#000;-webkit-text-stroke:0.25px #000;transform:scaleX(0.960);transform-origin:0 0">menopause, the hormone called estrogen decreases in the body.</div>
<div class="t" style="left:818px;top:502.40px;font-size:5.6px;font-family:'Liberation Serif';color:#000;-webkit-text-stroke:0.25px #000;transform:scaleX(0.943);transform-origin:0 0">As a result, the level of bone loss suddenly increases.</div>
<svg style="left:817px;top:355px" width="136" height="87" viewBox="0 0 136 87">
 <defs>
  <filter id="bl" x="-10%" y="-10%" width="120%" height="120%"><feGaussianBlur stdDeviation="1.3"/></filter>
  <filter id="bl2" x="-10%" y="-10%" width="120%" height="120%"><feGaussianBlur stdDeviation="0.9"/></filter>
  <clipPath id="cp"><rect width="136" height="87"/></clipPath>
  <linearGradient id="wat" x1="0" y1="0" x2="0" y2="1"><stop offset="0" stop-color="#28a67a"/><stop offset="0.5" stop-color="#22986c"/><stop offset="1" stop-color="#18684e"/></linearGradient>
 </defs>
 <g clip-path="url(#cp)">
  <rect width="136" height="87" fill="#304632"/>
  <g filter="url(#bl)">
   <ellipse cx="61.5" cy="28.0" rx="4.1" ry="4.6" fill="#334a30"/><ellipse cx="25.8" cy="40.2" rx="5.3" ry="3.9" fill="#48663c"/><ellipse cx="41.3" cy="4.5" rx="4.6" ry="4.1" fill="#1e2a1e"/><ellipse cx="61.6" cy="36.9" rx="2.6" ry="2.5" fill="#48663c"/><ellipse cx="8.1" cy="9.5" rx="4.6" ry="5.0" fill="#263626"/><ellipse cx="44.4" cy="29.5" rx="4.7" ry="4.5" fill="#5a7a48"/><ellipse cx="90.1" cy="22.9" rx="6.0" ry="6.7" fill="#3e5a36"/><ellipse cx="96.3" cy="15.8" rx="2.6" ry="2.6" fill="#1e2a1e"/><ellipse cx="14.7" cy="5.4" rx="3.9" ry="4.5" fill="#2c402a"/><ellipse cx="115.2" cy="0.0" rx="5.7" ry="4.2" fill="#263626"/><ellipse cx="51.1" cy="35.4" rx="4.7" ry="5.1" fill="#48663c"/><ellipse cx="36.7" cy="4.4" rx="2.6" ry="2.3" fill="#2c402a"/><ellipse cx="125.5" cy="6.7" rx="2.7" ry="3.0" fill="#3e5a36"/><ellipse cx="24.2" cy="28.0" rx="5.9" ry="6.5" fill="#5a7a48"/><ellipse cx="57.0" cy="19.2" rx="2.5" ry="2.8" fill="#5a7a48"/><ellipse cx="132.6" cy="29.6" rx="3.2" ry="2.9" fill="#3e5a36"/><ellipse cx="116.2" cy="32.1" rx="3.2" ry="2.7" fill="#7a9a58"/><ellipse cx="105.1" cy="16.4" rx="2.8" ry="2.2" fill="#48663c"/><ellipse cx="86.6" cy="0.8" rx="3.8" ry="3.5" fill="#2c402a"/><ellipse cx="130.4" cy="24.2" rx="3.1" ry="2.4" fill="#2c402a"/><ellipse cx="123.5" cy="40.9" rx="3.1" ry="3.1" fill="#5a7a48"/><ellipse cx="75.3" cy="34.3" rx="4.6" ry="4.2" fill="#334a30"/><ellipse cx="14.1" cy="1.9" rx="3.3" ry="3.5" fill="#2c402a"/><ellipse cx="34.9" cy="41.2" rx="4.3" ry="5.0" fill="#1e2a1e"/><ellipse cx="132.9" cy="6.3" rx="5.5" ry="5.5" fill="#527044"/><ellipse cx="38.1" cy="45.9" rx="2.7" ry="2.5" fill="#3e5a36"/><ellipse cx="33.9" cy="2.3" rx="3.8" ry="3.7" fill="#2c402a"/><ellipse cx="17.9" cy="18.1" rx="5.9" ry="6.1" fill="#334a30"/><ellipse cx="94.0" cy="29.2" rx="5.7" ry="5.4" fill="#3e5a36"/><ellipse cx="48.6" cy="15.6" rx="4.7" ry="4.4" fill="#9cbc70"/><ellipse cx="99.3" cy="15.9" rx="4.1" ry="3.6" fill="#48663c"/><ellipse cx="6.0" cy="46.8" rx="5.3" ry="6.1" fill="#263626"/><ellipse cx="47.8" cy="34.3" rx="5.8" ry="4.2" fill="#2c402a"/><ellipse cx="68.0" cy="0.7" rx="3.8" ry="2.7" fill="#334a30"/><ellipse cx="9.8" cy="4.5" rx="6.0" ry="6.8" fill="#1e2a1e"/><ellipse cx="99.0" cy="19.4" rx="4.1" ry="3.8" fill="#48663c"/><ellipse cx="73.6" cy="25.9" rx="4.6" ry="4.3" fill="#1e2a1e"/><ellipse cx="31.3" cy="34.9" rx="4.8" ry="4.5" fill="#48663c"/><ellipse cx="121.9" cy="18.4" rx="3.2" ry="2.5" fill="#48663c"/><ellipse cx="123.2" cy="33.0" rx="3.6" ry="3.8" fill="#5a7a48"/><ellipse cx="27.0" cy="21.5" rx="5.6" ry="5.0" fill="#5a7a48"/><ellipse cx="79.3" cy="15.8" rx="3.7" ry="4.3" fill="#8aaa62"/><ellipse cx="5.5" cy="3.2" rx="5.4" ry="4.1" fill="#2c402a"/><ellipse cx="64.1" cy="46.3" rx="4.7" ry="4.4" fill="#2c402a"/><ellipse cx="42.9" cy="42.0" rx="3.6" ry="4.0" fill="#334a30"/><ellipse cx="37.8" cy="30.4" rx="4.5" ry="3.8" fill="#1e2a1e"/><ellipse cx="107.6" cy="1.0" rx="3.9" ry="3.1" fill="#263626"/><ellipse cx="104.6" cy="13.3" rx="5.9" ry="4.5" fill="#3e5a36"/><ellipse cx="14.8" cy="26.8" rx="5.9" ry="6.1" fill="#2c402a"/><ellipse cx="27.1" cy="23.8" rx="5.1" ry="5.0" fill="#3e5a36"/><ellipse cx="4.9" cy="11.3" rx="4.4" ry="5.1" fill="#2c402a"/><ellipse cx="68.1" cy="49.8" rx="5.7" ry="4.2" fill="#5a7a48"/><ellipse cx="126.8" cy="36.1" rx="3.2" ry="3.6" fill="#8aaa62"/><ellipse cx="0.9" cy="27.5" rx="4.1" ry="4.2" fill="#2c402a"/><ellipse cx="27.9" cy="36.1" rx="5.7" ry="4.4" fill="#527044"/><ellipse cx="33.0" cy="19.5" rx="4.4" ry="4.8" fill="#8aaa62"/><ellipse cx="43.6" cy="45.5" rx="4.3" ry="3.1" fill="#263626"/><ellipse cx="46.5" cy="21.1" rx="3.3" ry="3.7" fill="#3e5a36"/><ellipse cx="58.3" cy="1.8" rx="4.9" ry="5.7" fill="#2c402a"/><ellipse cx="64.0" cy="50.0" rx="5.4" ry="5.7" fill="#3e5a36"/><ellipse cx="128.6" cy="24.6" rx="5.2" ry="4.7" fill="#48663c"/><ellipse cx="76.0" cy="41.6" rx="4.3" ry="4.9" fill="#527044"/><ellipse cx="76.2" cy="15.6" rx="3.2" ry="3.6" fill="#48663c"/><ellipse cx="131.7" cy="26.2" rx="3.9" ry="3.0" fill="#5a7a48"/><ellipse cx="0.7" cy="18.9" rx="4.3" ry="3.9" fill="#1e2a1e"/><ellipse cx="108.9" cy="28.1" rx="3.1" ry="3.6" fill="#5a7a48"/><ellipse cx="62.4" cy="46.0" rx="3.4" ry="3.2" fill="#2c402a"/><ellipse cx="17.3" cy="21.7" rx="4.3" ry="3.3" fill="#334a30"/><ellipse cx="57.1" cy="1.5" rx="3.0" ry="3.2" fill="#2c402a"/><ellipse cx="3.1" cy="9.7" rx="2.5" ry="2.1" fill="#263626"/><ellipse cx="98.4" cy="12.2" rx="5.1" ry="3.9" fill="#334a30"/><ellipse cx="69.4" cy="12.5" rx="5.6" ry="4.0" fill="#3e5a36"/><ellipse cx="86.1" cy="41.3" rx="3.2" ry="3.3" fill="#3e5a36"/><ellipse cx="86.8" cy="26.5" rx="4.6" ry="3.5" fill="#48663c"/><ellipse cx="124.4" cy="31.4" rx="3.6" ry="3.1" fill="#527044"/><ellipse cx="125.5" cy="10.9" rx="3.0" ry="2.4" fill="#48663c"/><ellipse cx="98.8" cy="13.0" rx="4.4" ry="4.6" fill="#8aaa62"/><ellipse cx="27.3" cy="31.4" rx="3.2" ry="3.3" fill="#48663c"/><ellipse cx="123.9" cy="48.4" rx="4.7" ry="4.1" fill="#9cbc70"/><ellipse cx="135.8" cy="41.6" rx="2.9" ry="2.1" fill="#334a30"/><ellipse cx="75.0" cy="25.7" rx="3.2" ry="2.4" fill="#527044"/><ellipse cx="23.5" cy="7.9" rx="2.8" ry="2.1" fill="#527044"/><ellipse cx="129.4" cy="23.1" rx="3.9" ry="3.5" fill="#263626"/><ellipse cx="48.2" cy="10.5" rx="5.0" ry="5.6" fill="#527044"/><ellipse cx="24.7" cy="22.7" rx="5.7" ry="5.7" fill="#2c402a"/><ellipse cx="12.9" cy="39.6" rx="5.6" ry="6.2" fill="#2c402a"/><ellipse cx="95.8" cy="43.0" rx="4.5" ry="3.6" fill="#2c402a"/><ellipse cx="79.5" cy="17.0" rx="5.7" ry="6.1" fill="#1e2a1e"/><ellipse cx="105.8" cy="40.7" rx="5.6" ry="5.8" fill="#263626"/><ellipse cx="104.3" cy="38.3" rx="3.1" ry="3.5" fill="#5a7a48"/><ellipse cx="41.0" cy="5.0" rx="5.7" ry="4.1" fill="#527044"/><ellipse cx="37.1" cy="48.1" rx="4.8" ry="4.7" fill="#5a7a48"/><ellipse cx="72.5" cy="19.5" rx="3.2" ry="2.5" fill="#527044"/><ellipse cx="53.8" cy="28.7" rx="5.1" ry="4.2" fill="#7a9a58"/><ellipse cx="54.6" cy="2.5" rx="4.8" ry="3.4" fill="#263626"/><ellipse cx="35.2" cy="13.8" rx="4.3" ry="5.1" fill="#3e5a36"/><ellipse cx="77.2" cy="49.8" rx="2.8" ry="2.8" fill="#527044"/><ellipse cx="103.3" cy="2.3" rx="3.9" ry="4.6" fill="#263626"/><ellipse cx="116.4" cy="27.1" rx="5.8" ry="5.3" fill="#2c402a"/><ellipse cx="71.6" cy="29.9" rx="4.2" ry="3.5" fill="#1e2a1e"/><ellipse cx="126.4" cy="33.2" rx="2.5" ry="2.1" fill="#3e5a36"/><ellipse cx="5.8" cy="7.8" rx="2.7" ry="2.3" fill="#334a30"/><ellipse cx="54.1" cy="29.1" rx="2.8" ry="3.2" fill="#263626"/><ellipse cx="58.4" cy="23.9" rx="2.7" ry="2.0" fill="#5a7a48"/><ellipse cx="110.2" cy="45.5" rx="4.6" ry="3.5" fill="#5a7a48"/><ellipse cx="84.9" cy="22.8" rx="3.7" ry="2.9" fill="#3e5a36"/><ellipse cx="49.4" cy="7.0" rx="3.4" ry="3.4" fill="#48663c"/><ellipse cx="57.1" cy="38.9" rx="5.8" ry="6.2" fill="#527044"/><ellipse cx="32.4" cy="5.7" rx="4.7" ry="4.1" fill="#3e5a36"/><ellipse cx="36.9" cy="34.3" rx="3.2" ry="2.7" fill="#48663c"/>
   <path d="M0 0 H15 C13 20 17 35 13 52 H0 Z" fill="#1a221a"/>
   <ellipse cx="62" cy="38" rx="5" ry="8" fill="#a0c076"/>
   <ellipse cx="58" cy="31" rx="3" ry="4" fill="#b4cc84"/>
  </g>
  <rect x="0" y="48" width="136" height="39" fill="url(#wat)"/>
  <g filter="url(#bl2)">
   <path d="M40 46 H136 V50 H40 Z" fill="#3e4a40"/>
   <path d="M0 50 C15 50 30 53 40 56 C38 60 46 64 44 70 C30 72 12 70 0 74 Z" fill="#5a4c48"/>
   <path d="M0 58 C12 58 24 60 30 65 C22 69 10 69 0 70 Z" fill="#8a7a76"/>
   <path d="M70 50 C85 48 100 52 136 50 V56 C110 56 90 54 70 54 Z" fill="#4a4a44"/>
   <ellipse cx="82" cy="62" rx="28" ry="2" fill="#52c89c"/>
   <ellipse cx="60" cy="74" rx="24" ry="1.8" fill="#44b48a"/>
   <ellipse cx="112" cy="82" rx="26" ry="5" fill="#1a4a3a"/>
   <ellipse cx="66" cy="54" rx="8" ry="2.2" fill="#6cd0a8"/>
  </g>
 </g>
</svg>
<!-- CURSOR -->
<svg style="left:624px;top:179px" width="20" height="18" viewBox="0 0 20 18">
 <path d="M1.5 1 V13.5 L4.3 10.8 L6.7 16.2 L8.6 15.3 L6.3 10 H10 Z" fill="#fff" stroke="#333" stroke-width="1" stroke-linejoin="round"/>
 <path d="M10.2 1.6 H17.2 M10.2 13.8 H17.2" stroke="#111" stroke-width="1.8"/>
 <path d="M11 2.5 C11 6 13.7 6.5 13.7 7.7 C13.7 8.9 11 9.4 11 13 H16.4 C16.4 9.4 13.7 8.9 13.7 7.7 C13.7 6.5 16.4 6 16.4 2.5 Z" fill="#fff" stroke="#111" stroke-width="1.1"/>
 <path d="M12.2 12.6 L13.7 10.5 L15.2 12.6 Z" fill="#111"/>
</svg>
</body></html>
